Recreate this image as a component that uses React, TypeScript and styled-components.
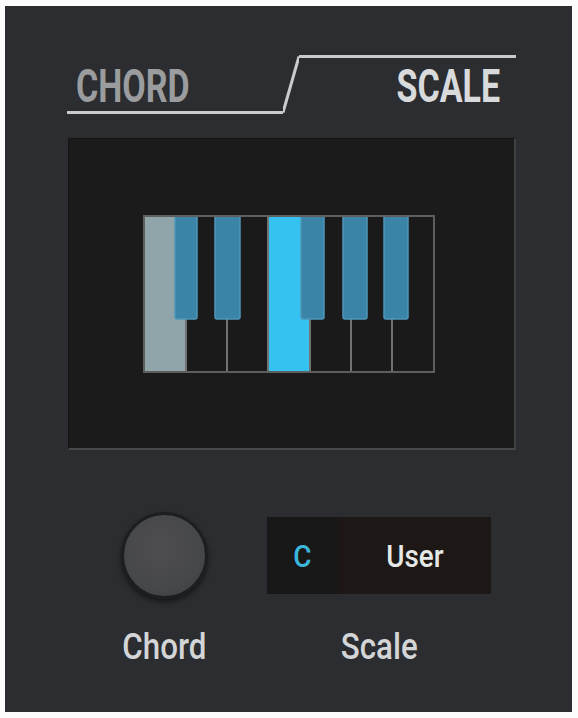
import styled, { createGlobalStyle } from "styled-components"

const GlobalStyle = createGlobalStyle`
  html, body {
    margin: 0;
    padding: 0;
    background: #fcfcfc;
  }
  body {
    font-family: Roboto, "DejaVu Sans Condensed", "Liberation Sans", sans-serif;
  }
`

const Panel = styled.div`
  box-sizing: border-box;
  width: 567px;
  height: 706px;
  margin: 6px 0 0 5px;
  padding-top: 49px;
  background: #2b2d31;
  display: flex;
  flex-direction: column;
`

const TabHeader = styled.div`
  display: flex;
  height: 59px;
  margin-left: 62px;
`

const Tab = styled.div<{ active?: boolean }>`
  box-sizing: border-box;
  display: flex;
  width: ${({ active }) => (active ? "217px" : "216px")};
  justify-content: ${({ active }) => (active ? "flex-end" : "flex-start")};
  padding: ${({ active }) => (active ? "5px 16px 0 0" : "8px 0 0 9px")};
  border-top: ${({ active }) => (active ? "3px solid #c9cbcd" : "none")};
  border-bottom: ${({ active }) => (active ? "none" : "3px solid #c9cbcd")};
`

const TabText = styled.span<{ active?: boolean }>`
  display: inline-block;
  font-size: 46px;
  line-height: 46px;
  font-weight: bold;
  color: ${({ active }) => (active ? "#d8dadb" : "#9a9c9e")};
  transform: scaleX(0.74);
  transform-origin: ${({ active }) => (active ? "right" : "left")} center;
`

const Slant = styled.svg`
  display: block;
  width: 16px;
  height: 59px;
`

const Screen = styled.div`
  box-sizing: border-box;
  width: 448px;
  height: 312px;
  margin: 24px 0 0 63px;
  display: flex;
  align-items: center;
  justify-content: center;
  padding: 0 6px 0 0;
  background: #1c1b1b;
  border-top: 1px solid #141313;
  border-left: 1px solid #151414;
  border-right: 2px solid #3e3f41;
  border-bottom: 2px solid #48494b;
`

const Keys = styled.svg`
  display: block;
  width: 292px;
  height: 158px;
`

const Controls = styled.div`
  display: flex;
  gap: 53px;
  margin-top: 62px;
  padding-left: 109px;
`

const Column = styled.div<{ width: number }>`
  display: flex;
  flex-direction: column;
  align-items: center;
  width: ${({ width }) => width}px;
`

const Slot = styled.div`
  display: flex;
  align-items: center;
  justify-content: center;
  height: 87px;
`

const Knob = styled.div`
  box-sizing: border-box;
  width: 87px;
  height: 87px;
  border-radius: 50%;
  border: 3px solid #1d1e20;
  background: radial-gradient(circle at 45% 40%, #4e4e50 0%, #464749 65%, #3c3d3f 100%);
  box-shadow: 0 3px 5px rgba(0, 0, 0, 0.5);
`

const ValueBox = styled.div`
  display: flex;
  width: 224px;
  height: 77px;
`

const ValueCell = styled.div<{ width: number; tone: string; ink: string }>`
  display: flex;
  align-items: center;
  justify-content: center;
  width: ${({ width }) => width}px;
  background: ${({ tone }) => tone};
  color: ${({ ink }) => ink};
  font-size: 32px;
  font-weight: 500;
`

const Squeezed = styled.span`
  display: inline-block;
  transform: scaleX(0.87);
`

const Label = styled.div`
  margin-top: 30px;
  font-size: 36px;
  line-height: 36px;
  font-weight: 500;
  color: #d3d5d6;
`

const whiteEdges = [0, 42, 83, 124, 166, 207, 248, 290]
const lit: Record<number, string> = { 0: "#8fa5a9", 3: "#35c2f1" }
const blackKeys = [
  { x: 31, w: 22 },
  { x: 71, w: 25 },
  { x: 157, w: 23 },
  { x: 199, w: 24 },
  { x: 240, w: 24 },
]

const Keyboard = () => (
  <Keys viewBox="-1 -1 292 158">
    <rect x={0} y={0} width={290} height={156} fill="#1b1a1a" />
    {whiteEdges.slice(0, -1).map((x, i) =>
      lit[i] ? (
        <rect key={x} x={x} y={0} width={whiteEdges[i + 1] - x} height={156} fill={lit[i]} />
      ) : null
    )}
    {whiteEdges.slice(1, -1).map((x) => (
      <line key={x} x1={x} y1={0} x2={x} y2={156} stroke="#727272" strokeWidth={2} />
    ))}
    {blackKeys.map((k) => (
      <rect
        key={k.x}
        x={k.x}
        y={-1}
        width={k.w}
        height={104}
        rx={2}
        fill="#3a84a7"
        stroke="#4f96b8"
        strokeWidth={1.5}
      />
    ))}
    <rect x={0} y={0} width={290} height={156} fill="none" stroke="#5e5e5e" strokeWidth={2} />
  </Keys>
)

export default function App() {
  return (
    <>
      <GlobalStyle />
      <Panel>
        <TabHeader>
          <Tab>
            <TabText>CHORD</TabText>
          </Tab>
          <Slant viewBox="0 0 16 59">
            <line x1={0} y1={57.5} x2={16} y2={1.5} stroke="#c9cbcd" strokeWidth={3} />
          </Slant>
          <Tab active>
            <TabText active>SCALE</TabText>
          </Tab>
        </TabHeader>
        <Screen>
          <Keyboard />
        </Screen>
        <Controls>
          <Column width={100}>
            <Slot>
              <Knob />
            </Slot>
            <Label>
              <Squeezed>Chord</Squeezed>
            </Label>
          </Column>
          <Column width={224}>
            <Slot>
              <ValueBox>
                <ValueCell width={71} tone="#181818" ink="#3cb6dc">
                  <Squeezed>C</Squeezed>
                </ValueCell>
                <ValueCell width={153} tone="#1d1715" ink="#e4e8e6">
                  <Squeezed>User</Squeezed>
                </ValueCell>
              </ValueBox>
            </Slot>
            <Label>
              <Squeezed>Scale</Squeezed>
            </Label>
          </Column>
        </Controls>
      </Panel>
    </>
  )
}
